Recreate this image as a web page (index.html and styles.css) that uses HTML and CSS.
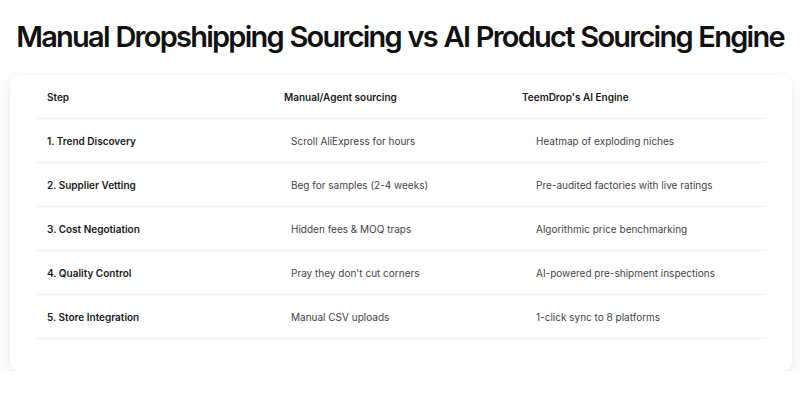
FILE: index.html
```html
<!DOCTYPE html>
<html>
<head>
<meta charset="utf-8">
<link rel="stylesheet" href="styles.css">
</head>
<body>
<h1 class="title">Manual Dropshipping Sourcing vs AI Product Sourcing Engine</h1>
<div class="card">
  <table class="cmp">
    <thead>
      <tr><th class="c1">Step</th><th class="c2">Manual/Agent sourcing</th><th class="c3">TeemDrop's AI Engine</th></tr>
    </thead>
    <tbody>
      <tr><td class="c1">1. Trend Discovery</td><td class="c2">Scroll AliExpress for hours</td><td class="c3">Heatmap of exploding niches</td></tr>
      <tr><td class="c1">2. Supplier Vetting</td><td class="c2">Beg for samples (2-4 weeks)</td><td class="c3">Pre-audited factories with live ratings</td></tr>
      <tr><td class="c1">3. Cost Negotiation</td><td class="c2">Hidden fees &amp; MOQ traps</td><td class="c3">Algorithmic price benchmarking</td></tr>
      <tr><td class="c1">4. Quality Control</td><td class="c2">Pray they don't cut corners</td><td class="c3">AI-powered pre-shipment inspections</td></tr>
      <tr><td class="c1">5. Store Integration</td><td class="c2">Manual CSV uploads</td><td class="c3">1-click sync to 8 platforms</td></tr>
    </tbody>
  </table>
</div>
</body>
</html>
```
FILE: styles.css
```css
* { box-sizing: border-box; }
html, body { margin: 0; padding: 0; background: #ffffff; }
body { font-family: "Inter", "Liberation Sans", sans-serif; color: #111; }
.title {
  margin: 0;
  padding-top: 19px;
  height: 75px;
  text-align: center;
  white-space: nowrap;
  font-size: 29px;
  font-weight: 600;
  letter-spacing: -1.75px;
  word-spacing: 1px;
  line-height: 36px;
  color: #111;
}
.card {
  margin: 0 8px 0 10px;
  width: 782px;
  background: #fff;
  border-radius: 9px;
  box-shadow: 0 8px 20px rgba(0,0,0,0.08), 0 0 4px rgba(0,0,0,0.04);
  padding: 0 26px 32px;
}
.cmp {
  width: 100%;
  border-collapse: collapse;
  table-layout: fixed;
  font-size: 10px;
}
.cmp th, .cmp td {
  text-align: left;
  border-bottom: 1px solid #eeeeee;
  padding: 2px 0 0 11px;
}
.cmp th { height: 43px; font-weight: 600; color: #1a1a1a; }
.cmp td { height: 44px; color: #444; }
.cmp td.c1 { font-weight: 600; color: #1a1a1a; }
.cmp .c1 { width: 237px; }
.cmp .c2 { width: 238px; }
.cmp td.c2 { padding-left: 18px; }
.cmp td.c3 { padding-left: 25px; }
```
